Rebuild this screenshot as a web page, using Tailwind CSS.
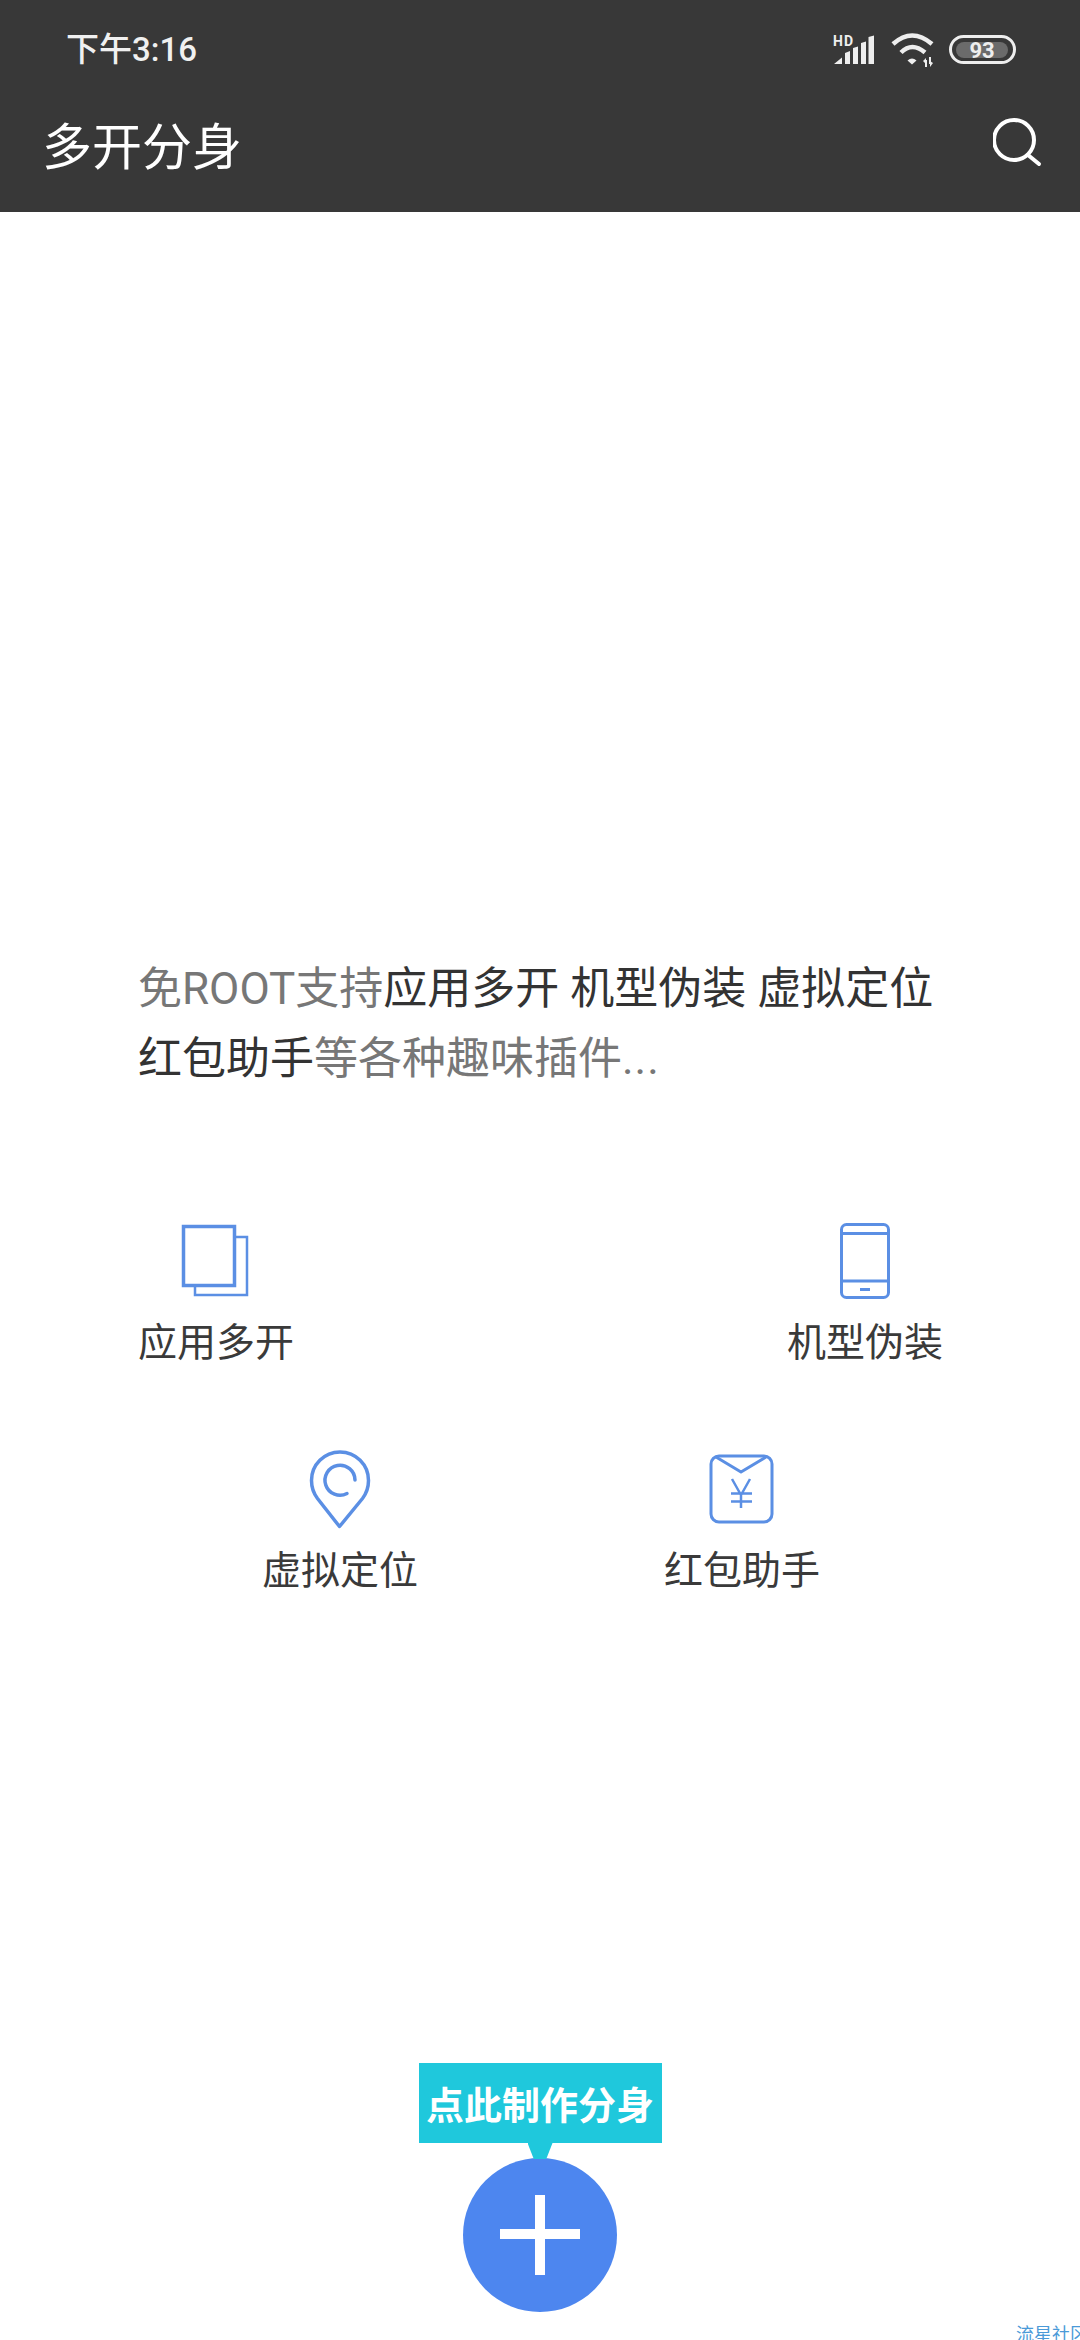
<!DOCTYPE html>
<html lang="zh"><head><meta charset="utf-8">
<script src="https://cdn.jsdelivr.net/npm/@tailwindcss/browser@4"></script></head>
<body class="m-0">
<div class="relative w-[1080px] h-[2340px] overflow-hidden bg-white flex flex-col font-['Noto_Sans_CJK_SC','Noto_Sans',sans-serif] text-[#3a3a3a]">
  <header class="h-[212px] shrink-0 bg-[#383838] text-white">
    <div class="h-[100px] flex items-center justify-between pl-[66px] pr-[62px]">
      <span class="text-[33px] font-medium text-[#f0f0f0] font-['Roboto','Noto_Sans_CJK_SC',sans-serif]">下午3:16</span>
      <div class="flex items-center gap-[14px]">
        <svg width="44" height="34" viewBox="832 31 44 34" fill="#eee"><text x="833" y="43.500" font-size="14" font-weight="700" font-family="Roboto" letter-spacing="1">HD</text>
          <path d="M834 62l8-6.500V62zM845 62V51l5-2v13zM853 62V46l5-1.500V62zM861 62V41l5-1.500V62zM868.500 62V35l5.500-1.500V62z"/></svg>
        <svg width="44" height="36" viewBox="889 32 44 36" fill="none" stroke="#eee" stroke-width="4.500"><path d="M892 44q19-17 39 0M900 52.500q11-11 24 0"/><path d="M906.500 60.500q4.500-4 9 0l-4.500 4z" fill="#eee" stroke="none"/><path d="M925 60v7M929 57v7" stroke-width="2"/><path d="M922 61l3-3 0 6zM932 63l-3 4 0-6z" fill="#eee" stroke="none"/></svg>
        <svg width="70" height="32" viewBox="947 33 70 32"><rect x="949.500" y="35.500" width="64" height="26" rx="13" fill="none" stroke="#eee" stroke-width="3"/><rect x="955" y="41" width="52" height="16" rx="8" fill="#6b6b6b"/><text x="981" y="57" text-anchor="middle" font-size="22" font-weight="700" fill="#eee" font-family="Roboto">93</text></svg>
      </div>
    </div>
    <div class="h-[92px] pb-[6px] flex items-center justify-between pl-[42px] pr-[35px]">
      <h1 class="text-[50px] font-normal leading-none">多开分身</h1>
      <svg width="52" height="52" viewBox="992 120 52 52" fill="none" stroke="#fff" stroke-width="4" stroke-linecap="round"><circle cx="1013" cy="143" r="20"/><path d="M1027 158l11 9"/></svg>
    </div>
  </header>
  <main class="flex-1 flex flex-col">
    <p class="mt-[742px] pl-[138px] pr-[120px] text-[44px] leading-[70px] text-[#777] font-['Roboto','Noto_Sans_CJK_SC',sans-serif]">免ROOT支持<span class="text-[#333]">应用多开 机型伪装 虚拟定位 红包助手</span>等各种趣味插件<span class="tracking-[1px]">...</span></p>
    <div class="mt-[126px] pl-[138px] pr-[137px] flex justify-between">
      <div class="flex flex-col items-center">
        <svg width="80" height="80" viewBox="176 1220 80 80" fill="none" stroke="#5b8fe4"><path d="M236 1237h11v58h-52v-9" stroke-width="2.500"/><rect x="183.500" y="1226.500" width="51" height="59" stroke-width="3.500"/></svg>
        <span class="mt-[11px] text-[39px] leading-[56px]">应用多开</span>
      </div>
      <div class="flex flex-col items-center">
        <svg width="80" height="80" viewBox="824 1220 80 80" fill="none" stroke="#5b8fe4" stroke-width="3"><rect x="840.500" y="1224.500" width="47" height="73" rx="5"/><path d="M840 1233.500h48M840 1281h48M859 1289.500h10"/></svg>
        <span class="mt-[11px] text-[39px] leading-[56px]">机型伪装</span>
      </div>
    </div>
    <div class="mt-[82px] pl-[262px] pr-[260px] flex justify-between">
      <div class="flex flex-col items-center">
        <svg width="80" height="80" viewBox="299 1448 80 80" fill="none" stroke="#5b8fe4" stroke-width="3.500" stroke-linecap="round" stroke-linejoin="round"><path d="M338.500 1525.500l-22-28q-6-8-6-18a28.500 28.500 0 0 1 57 0q0 10-6 18z"/><path d="M354 1479a15 15 0 1 0-8 13.500"/></svg>
        <span class="mt-[10px] text-[39px] leading-[56px]">虚拟定位</span>
      </div>
      <div class="flex flex-col items-center">
        <svg width="80" height="80" viewBox="701 1448 80 80" fill="none" stroke="#5b8fe4" stroke-width="3"><rect x="710" y="1455" width="61" height="66" rx="8"/><path d="M715 1456l25 15 25-15" stroke-linejoin="round"/><path d="M731 1478l9 16 9-16M730 1492.500h21M730 1500.500h21M740 1494v13" stroke-width="2.500"/></svg>
        <span class="mt-[10px] text-[39px] leading-[56px]">红包助手</span>
      </div>
    </div>
    <div class="mt-auto pb-[28px] flex flex-col items-center">
      <div class="relative w-[243px] h-[80px] bg-[#1fc8dc] flex items-center justify-center text-white text-[38px] font-bold leading-none">点此制作分身
        <div class="absolute left-[109px] top-[80px] w-[25px] h-[16px] bg-[#1fc8dc] [clip-path:polygon(0_0,100%_0,75%_100%,25%_100%)]"></div>
      </div>
      <button class="mt-[15px] w-[154px] h-[154px] rounded-full bg-[#4d86ef] flex items-center justify-center">
        <svg width="80" height="80" viewBox="0 0 80 80" fill="#fff"><rect x="35" width="10" height="80"/><rect y="34" width="80" height="10"/></svg>
      </button>
    </div>
  </main>
  <div class="absolute left-[1016px] top-[2323px] w-[80px] text-[18px] leading-[20px] text-[#4a9ad8] whitespace-nowrap">流星社区</div>
</div>
</body></html>
